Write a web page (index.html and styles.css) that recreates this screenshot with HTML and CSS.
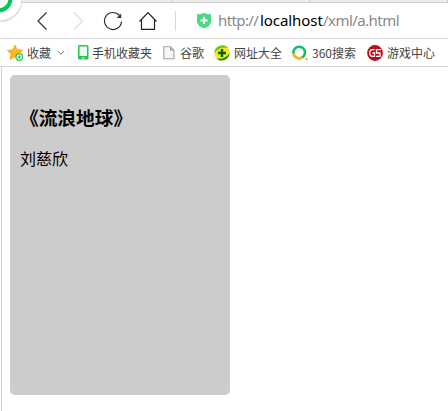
FILE: index.html
```html
<!DOCTYPE html>
<html lang="zh-CN">
<head>
<meta charset="utf-8">
<title>a.html</title>
<link rel="stylesheet" href="styles.css">
</head>
<body>
<div class="browser">
  <div class="tabs"><span></span><span></span><span></span></div>
  <svg class="logo" width="24" height="23" viewBox="0 0 24 23"><circle cx="0" cy="-1" r="21.5" fill="#fff"/><circle cx="-1" cy="-1" r="11.300" fill="none" stroke="#06c755" stroke-width="4"/></svg>
  <header class="toolbar">
    <svg class="nav" viewBox="0 0 20 20"><path d="M13.500 1.500 5 10 13.500 18.500" fill="none" stroke="#333" stroke-width="1.2"/></svg>
    <svg class="nav" viewBox="0 0 20 20"><path d="M6 1.500 14.500 10 6 18.500" fill="none" stroke="#dcdcdc" stroke-width="1.2"/></svg>
    <svg class="nav" viewBox="0 0 20 20"><path d="M18.500 10.500A8.500 8.500 0 1 1 16.500 4.500" fill="none" stroke="#333" stroke-width="1.2"/><path d="M18.200 2.500V7H13.700Z" fill="#333"/></svg>
    <svg class="nav" viewBox="0 0 20 20"><path d="M1.500 10.500 10 1.500 18.500 10.500M3.500 9V18.400H16.500V9" fill="none" stroke="#222" stroke-width="1.2"/></svg>
    <i class="divider"></i>
    <svg class="shield" width="14" height="16" viewBox="0 0 14 16"><path d="M0 1Q4 1.500 7 0Q10 1.500 14 1V9Q13 13.500 7 15.500Q1 13.500 0 9Z" fill="#4cd982"/><path d="M7 4V11M3.500 7.500H10.500" stroke="#fff" stroke-width="2"/></svg>
    <div class="url"><span class="scheme">http://</span><span class="host">localhost</span><span class="path">/xml/a.html</span></div>
  </header>
  <nav class="bookmarks">
    <a class="fav"><svg width="18" height="18" viewBox="0 0 18 18"><path d="M8 1 10.100 5.800 15.700 6.200 11.700 10 12.700 15.500 8 12.800 3 15.500 4 10 .3 6.400 5.700 5.800Z" fill="#ffb51c" stroke="#f8aa18" stroke-width=".8" stroke-linejoin="round"/><circle cx="12.300" cy="13" r="3.300" fill="#fff" stroke="#19c94e" stroke-width="1.200"/><path d="M12.300 11V15M10.300 13H14.300" stroke="#19c94e" stroke-width="1.200"/></svg><span>收藏</span><svg class="chevron" width="8" height="6" viewBox="0 0 8 6"><path d="M.8 1 4 4.200 7.200 1" fill="none" stroke="#777"/></svg></a>
    <a class="phone"><svg width="11" height="15" viewBox="0 0 11 15"><rect width="10.500" height="14.500" rx="1.500" fill="#20c64f"/><path d="M1.500 1.500H9V11H1.500Z" fill="#effff2"/><path d="M4 13H6.500" stroke="#fff"/></svg><span>手机收藏夹</span></a>
    <a class="page"><svg width="12" height="14" viewBox="0 0 12 14"><path d="M.8.8H7.500L11 4.300V12.800H.8ZM7.500.8V4.300H11" fill="#f7f7f7" stroke="#a0a0a0" stroke-width="1.100"/></svg><span>谷歌</span></a>
    <a class="sites"><svg width="16" height="16" viewBox="0 0 16 16"><circle cx="8" cy="8" r="7.700" fill="#f7e81b"/><path d="M.5 8C.5 3 5 0 10 .6C12 1 13 1.800 14 3C9 1.500 4 3 .5 8Z" fill="#62c51f"/><path d="M15.500 8C15.500 12.500 11 16 6 15.400Q4 15 2.500 13.500C8 14.500 13 12.500 15.500 8Z" fill="#078a20"/><path d="M8 4V12M4 8H12" stroke="#075f12" stroke-width="2.400"/></svg><span>网址大全</span></a>
    <a class="search"><svg width="16" height="16" viewBox="0 0 16 16"><circle cx="7.200" cy="7.500" r="5.800" fill="none" stroke="#16b968" stroke-width="2.500"/><path d="M1.400 8.500A5.800 5.800 0 0 0 10.500 12.300" fill="none" stroke="#fdb81e" stroke-width="2.500"/><circle cx="14.600" cy="14" r="1.200" fill="#fdb81e"/></svg><span>360搜索</span></a>
    <a class="games"><svg width="16" height="16" viewBox="0 0 16 16"><circle cx="8" cy="8" r="7.900" fill="#bd0d1c"/><path d="M7.500 4.700H5.500Q2.700 4.700 2.700 8Q2.700 11.300 5.500 11.300H7.500V8H5.500M14 4.700H9.500V8H13V11.300H9" fill="none" stroke="#fff" stroke-width="1.300"/></svg><span>游戏中心</span></a>
  </nav>
</div>
<main class="viewport">
  <article class="book"><h3>《流浪地球》</h3><p>刘慈欣</p></article>
</main>
</body>
</html>
```
FILE: styles.css
```css
* { box-sizing: border-box; }
body {
  margin: 0;
  height: 411px;
  overflow: hidden;
  background: #fff;
  color: #000;
  font-family: "Noto Sans", "Noto Sans CJK SC", sans-serif;
}
svg { display: block; flex: none; }
.browser { position: relative; height: 67px; }
.tabs { display: flex; height: 3px; background: #ececec; border-bottom: 1px solid #d2d2d2; }
.tabs span { width: 139px; border-right: 1px solid #c8c8c8; }
.tabs span:first-child { width: 173px; }
.logo { position: absolute; left: 0; top: 0; filter: drop-shadow(0 1px 1px #bbb); }
.toolbar { display: flex; align-items: center; height: 36px; padding-left: 33px; border-bottom: 1px solid #d5d5d5; }
.nav { width: 20px; height: 20px; margin-right: 15px; }
.nav:nth-child(4) { margin-right: 17px; }
.divider { width: 1px; height: 20px; margin-right: 21px; background: #d8d8d8; }
.shield { margin-right: 7px; }
.url { display: flex; font: 15px/20px "Noto Sans", sans-serif; color: #888; white-space: nowrap; padding-bottom: 1px; }
.scheme { width: 42px; letter-spacing: -.6px; }
.host { width: 63px; color: #000; letter-spacing: -.07px; }
.path { letter-spacing: -.55px; }
.bookmarks { display: flex; align-items: center; height: 28px; padding-left: 7px; border-bottom: 1px solid #d2d2d2; font: 12px/18px "Noto Sans CJK SC", sans-serif; color: #444; white-space: nowrap; }
.bookmarks a { display: flex; align-items: center; }
.fav { width: 71px; gap: 2px; }
.chevron { margin-left: 4px; }
.phone { width: 85px; gap: 3px; }
.page { width: 51px; gap: 5px; }
.sites { width: 78px; gap: 4px; }
.search { width: 75px; gap: 4px; }
.games { gap: 4px; }
.viewport { height: 344px; margin-left: 1px; padding: 8px; border-left: 1px solid #d0d0d0; }
.book { width: 220px; height: 320px; padding: 28px 10px 0; border-radius: 5px; background: #ccc; }
.book h3 { margin: 0; font: bold 18.7px/28px "Noto Sans CJK SC", sans-serif; }
.book p { margin: 15px 0 0; font: 16px/24px "Noto Sans CJK SC", sans-serif; }
```
